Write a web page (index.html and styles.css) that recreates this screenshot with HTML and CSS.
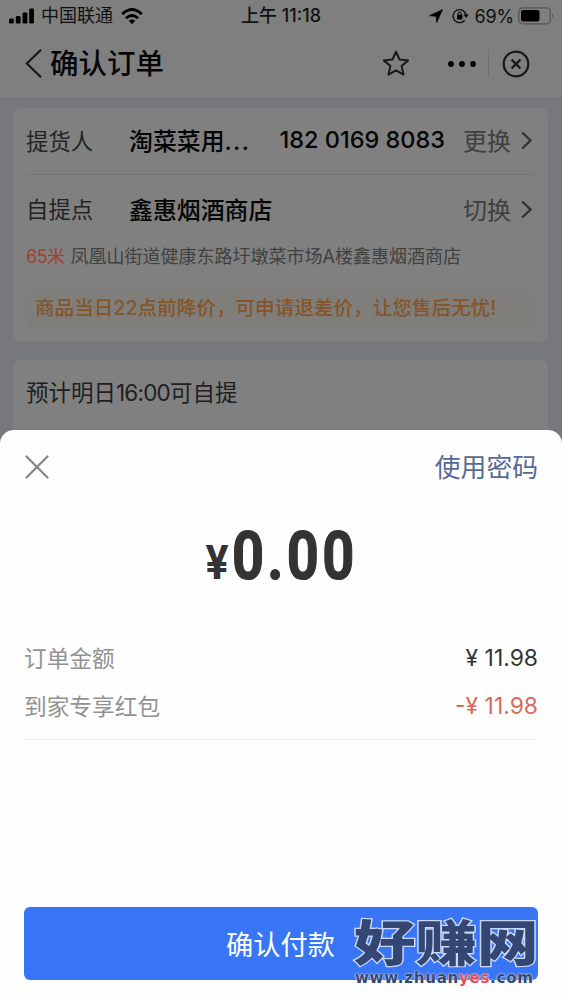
FILE: index.html
```html
<!DOCTYPE html>
<html lang="zh-CN">
<head>
<meta charset="utf-8">
<title>确认订单</title>
<link rel="stylesheet" href="styles.css">
</head>
<body>
<div class="screen">
  <header class="status">
    <div class="status-left">
      <svg class="signal" width="26" height="16" viewBox="0 0 26 16"><rect x="0" y="10.500" width="4.800" height="5" rx="1.200"/><rect x="6.800" y="8" width="4.800" height="7.500" rx="1.200"/><rect x="13.600" y="4.500" width="4.800" height="11" rx="1.200"/><rect x="20.200" y="0.500" width="4.800" height="15" rx="1.200"/></svg>
      <span class="carrier">中国联通</span>
      <svg class="wifi" width="22" height="17" viewBox="0 0 22 17"><path d="M1.200 6.100Q11-3 20.800 6.100" fill="none" stroke="#000" stroke-width="3"/><path d="M5 10.300Q11 4.600 17 10.300" fill="none" stroke="#000" stroke-width="2.800"/><path d="M7.800 12.700Q11 10.200 14.200 12.700L11 16.200z"/></svg>
    </div>
    <div class="clock">上午 11:18</div>
    <div class="status-right">
      <svg class="locate" width="14" height="14" viewBox="0 0 14 14"><path d="M13.500.5L7.800 13.500 7 7.300.5 6.700z" stroke="#000" stroke-width=".6" stroke-linejoin="round"/></svg>
      <svg class="rotate" width="17" height="16" viewBox="0 0 17 16"><path d="M12.700 12.200A6.500 6.500 0 1 1 14 7" fill="none" stroke="#111" stroke-width="1.400"/><path d="M11.600 6.500h4.900L14.100 10z"/><rect x="5" y="6.800" width="5.400" height="4.600" rx=".6"/><path d="M6.200 7V5.600a1.500 1.500 0 0 1 3 0V7" fill="none" stroke="#000" stroke-width="1"/></svg>
      <span class="percent">69%</span>
      <svg class="battery" width="36" height="18" viewBox="0 0 36 18"><rect x=".8" y=".8" width="31.600" height="16" rx="4" fill="none" stroke="#555" stroke-width="1.300"/><rect x="3" y="3" width="18.500" height="11.600" rx="2"/><path d="M34 6.500q2 2.300 0 4.600z" fill="#555"/></svg>
    </div>
  </header>
  <nav class="nav">
    <svg class="back" width="17" height="29" viewBox="0 0 17 29"><path d="M16 .8L1.800 14.500 16 28.200" fill="none" stroke="#151515" stroke-width="2"/></svg>
    <h1 class="title">确认订单</h1>
    <svg class="star" width="28" height="27" viewBox="0 0 28 27"><path d="M14 1.700L17.500 9.500 26.100 10.400 19.600 16.100 21.500 24.600 14 20.300 6.500 24.600 8.400 16.100 1.900 10.400 10.500 9.500z" fill="none" stroke="#181818" stroke-width="2" stroke-linejoin="round"/></svg>
    <div class="capsule">
      <svg width="30" height="8" viewBox="0 0 30 8"><circle cx="4" cy="4" r="2.900"/><circle cx="15" cy="4" r="2.900"/><circle cx="26" cy="4" r="2.900"/></svg>
      <i class="capsule-line"></i>
      <svg width="28" height="28" viewBox="0 0 28 28"><g fill="none" stroke="#181818" stroke-width="2.200"><circle cx="14" cy="14" r="12.300"/><path d="M9.600 9.600l8.800 8.800M18.400 9.600l-8.800 8.800"/></g></svg>
    </div>
  </nav>
  <main class="content">
    <section class="card pickup">
      <div class="row row-person">
        <span class="label">提货人</span>
        <span class="value">淘菜菜用<span class="dots">...</span></span>
        <span class="phone">182 0169 8083</span>
        <span class="action">更换</span>
        <svg class="chevron" width="11" height="19" viewBox="0 0 11 19"><path d="M1.200 1.500L9.500 9.500 1.200 17.500"/></svg>
      </div>
      <div class="row row-place">
        <span class="label">自提点</span>
        <span class="value">鑫惠烟酒商店</span>
        <span class="action">切换</span>
        <svg class="chevron" width="11" height="19" viewBox="0 0 11 19"><path d="M1.200 1.500L9.500 9.500 1.200 17.500"/></svg>
      </div>
      <p class="address"><span class="distance">65米</span>凤凰山街道健康东路圩墩菜市场A楼鑫惠烟酒商店</p>
      <p class="notice">商品当日22点前降价，可申请退差价，让您售后无忧!</p>
    </section>
    <section class="card arrival">预计明日<span class="time">16:00</span>可自提</section>
  </main>
  <section class="sheet">
    <div class="sheet-head">
      <svg width="24" height="24" viewBox="0 0 24 24"><path d="M1.500 1.500l21 21M22.500 1.500l-21 21" stroke="#858585" stroke-width="2.200" stroke-linecap="round"/></svg>
      <span class="password">使用密码</span>
    </div>
    <div class="amount"><span class="yen">¥</span><span class="number">0.00</span></div>
    <div class="details">
      <div class="line"><span class="name">订单金额</span><span class="price">¥ 11.98</span></div>
      <div class="line"><span class="name">到家专享红包</span><span class="price discount">-¥ 11.98</span></div>
    </div>
    <button class="pay">确认付款</button>
  </section>
  <div class="watermark">
    <div class="brand">好赚网</div>
    <div class="url">www.zhuan<span>yes</span>.com</div>
  </div>
</div>
</body>
</html>
```
FILE: styles.css
```css
* { box-sizing: border-box; }
body { margin: 0; font-family: Inter, "Noto Sans CJK SC", sans-serif; }
h1, p { margin: 0; font-weight: inherit; }
svg { display: block; flex: none; }
.screen { position: relative; width: 562px; height: 1000px; overflow: hidden; background: #77787b; white-space: nowrap; }

.status { height: 32px; padding: 0 9px; background: #7f7f7f; display: grid; grid-template-columns: 1fr auto 1fr; align-items: center; color: #111; }
.status-left, .status-right { display: flex; align-items: center; }
.status-right { justify-content: flex-end; }
.carrier { margin: 0 8px 0 6px; font-size: 18px; line-height: 30px; }
.clock { font-size: 18px; font-weight: 500; line-height: 30px; }
.rotate { margin-left: 9px; }
.status-right { margin-right: -1px; }
.percent { margin: 0 4px 0 6px; font-size: 18px; letter-spacing: -.2px; }

.nav { height: 65px; padding: 0 32px 2px 25px; background: #7f7f7f; display: flex; align-items: center; }
.title { margin-left: 8px; font-size: 28.500px; line-height: 40px; font-weight: 500; color: #050505; }
.star { margin-left: auto; }
.capsule { display: flex; align-items: center; margin-left: 37px; }
.capsule-line { width: 1px; height: 27px; margin: 0 13px 0 11px; background: #717171; }

.content { display: flex; flex-direction: column; gap: 18px; padding: 11px 14px 0 13px; }
.card { border-radius: 8px; background: #808080; }
.pickup { height: 234px; padding: 0 13px; }
.row { display: flex; align-items: center; height: 68px; padding-bottom: 2px; }
.row-person { border-bottom: 1px solid #757575; height: 67px; padding-bottom: 3px; }
.label { width: 103px; font-size: 22.400px; color: #242424; }
.value { font-size: 23.900px; font-weight: 500; color: #050505; }
.dots { letter-spacing: 1.300px; }
.phone { margin-left: auto; font-size: 23.500px; font-weight: 500; color: #050505; }
.action { margin-left: 18px; font-size: 24px; color: #3f3f3f; }
.row-place .action { margin-left: auto; }
.chevron { margin: 2px 3px 0 10px; fill: none; stroke: #343434; stroke-width: 2.400; }
.address { height: 26px; font-size: 18px; line-height: 28px; color: #414141; }
.distance { margin-right: 6px; color: #a2412b; letter-spacing: -.5px; }
.notice { height: 40px; margin-top: 21px; padding-left: 9px; border-radius: 8px; background: #807e7b; font-size: 19.600px; font-weight: 500; line-height: 37px; color: #845529; }
.arrival { height: 110px; padding: 15px 13px; font-size: 22.500px; line-height: 36px; color: #202020; }
.time { letter-spacing: -.8px; }

.sheet { position: absolute; left: 0; right: 0; bottom: 0; height: 570px; padding: 17px 24px 20px; border-radius: 14px 14px 0 0; background: #fefefe; display: flex; flex-direction: column; }
.sheet-head { height: 40px; display: flex; align-items: center; justify-content: space-between; padding-left: 1px; }
.password { margin-top: -3px; font-size: 25.800px; color: #566b93; }
.amount { height: 80px; margin-top: 29px; padding-left: 179px; display: flex; align-items: baseline; font-family: Roboto, sans-serif; font-weight: 700; color: #333; line-height: 80px; }
.yen { width: 29px; font-size: 49px; text-indent: 1px; transform: scaleX(.88); }
.number { font-size: 67px; letter-spacing: 3.900px; -webkit-text-stroke: 1.200px #333; transform: scaleX(.835); transform-origin: left; }
.details { margin-top: 38px; border-bottom: 1px solid #ededed; height: 106px; }
.line { display: flex; justify-content: space-between; height: 48px; align-items: center; padding-bottom: 2px; }
.name { font-size: 22.700px; color: #929292; }
.price { padding-top: 2px; font-size: 22.900px; color: #353535; }
.discount { color: #d8695d; }
.pay { margin-top: auto; height: 73px; padding: 0 1px 0 0; border: 0; border-radius: 6px; background: #3976f6; color: #fff; font: 400 27.200px/73px "Noto Sans CJK SC", sans-serif; }

.watermark { position: absolute; left: 354px; top: 919px; width: 190px; color: #344774; }
.brand { height: 50px; font: 900 61.500px/52px "Noto Sans CJK SC", sans-serif; -webkit-text-stroke: 3px #c9d9fa; paint-order: stroke fill; transform: scaleY(.8); transform-origin: top; }
.url { width: 184px; margin-left: 1px; font: 700 15px/16px "DejaVu Sans", sans-serif; letter-spacing: .75px; text-shadow: 0 0 1px #fff, 0 0 2px #dce5fa; transform: translateY(1px); }
.url span { color: #e0515c; }
```
